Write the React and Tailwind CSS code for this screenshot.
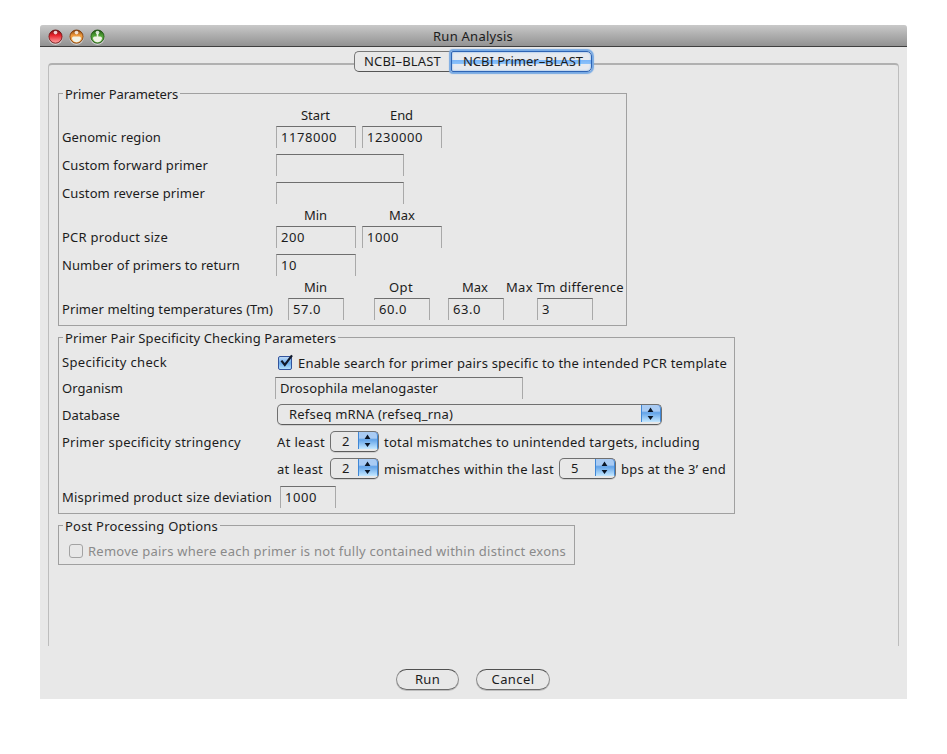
import { useLayoutEffect, useRef, useState } from "react";
import clsx from "clsx";

/* Text run tracked so that its line is exactly `w` pixels wide. */
function T({ w, className, children }) {
  const ref = useRef(null);
  const [spacing, setSpacing] = useState(0);
  useLayoutEffect(() => {
    const el = ref.current;
    el.style.letterSpacing = "0px";
    const natural = el.getBoundingClientRect().width;
    const next = (w - natural) / el.textContent.length;
    el.style.letterSpacing = next + "px";
    setSpacing(next);
  }, [w, children]);
  return (
    <span
      ref={ref}
      className={clsx("inline-block shrink-0 whitespace-pre", className)}
      style={{ letterSpacing: spacing + "px" }}
    >
      {children}
    </span>
  );
}

function Light({ kind }) {
  const colors = {
    red: ["#6d1212", "#e8222b", "#ffa6a6"],
    amber: ["#7d3a08", "#ee9a3c", "#f4ab55"],
    green: ["#1d5210", "#4fa035", "#6fbb52"],
  }[kind];
  return (
    <svg className="h-[16px] w-[15px]" viewBox="0 0 15 16">
      <defs>
        <linearGradient id={"g-" + kind} x1="0" y1="0" x2="0" y2="1">
          <stop offset="0" stopColor={colors[0]} />
          <stop offset="0.4" stopColor={colors[1]} />
          <stop offset="1" stopColor={colors[2]} />
        </linearGradient>
      </defs>
      <circle cx="7.5" cy="8.6" r="7.3" fill="#dcdcdc" opacity="0.8" />
      <circle cx="7.5" cy="7.6" r="6.6" fill={`url(#g-${kind})`} stroke={colors[0]} strokeWidth="0.9" />
      {kind !== "red" && <path d="M3 9.4 Q3 7.4 4.6 7.4 H10.4 Q12 7.4 12 9.4 Q11 13.2 7.5 13.2 Q4 13.2 3 9.4 Z" fill="#f0f2e6" />}
      {kind === "green" && <rect x="6.7" y="4.5" width="1.6" height="4" fill="#f0f2e6" />}
      <ellipse cx="7.5" cy="3.6" rx="1.9" ry="1.8" fill="#fff" opacity="0.8" />
    </svg>
  );
}

function Field({ className, w, children }) {
  return (
    <div
      className={clsx(
        "flex h-[22px] shrink-0 items-center border-x border-t border-x-[#a9a9a9] border-t-[#6e6e6e] pb-px pl-[4px]",
        className
      )}
    >
      {children && <T w={w}>{children}</T>}
    </div>
  );
}

function Row({ h, label, w, labelClass, children }) {
  return (
    <div className={clsx("flex items-center", h)}>
      <div className={clsx("w-[214px] shrink-0 whitespace-nowrap", labelClass)}>{label && <T w={w}>{label}</T>}</div>
      {children}
    </div>
  );
}

function Group({ title, w, className, children }) {
  return (
    <section className={clsx("relative border border-[#a0a0a0] pl-[3px]", className)}>
      <h2 className="absolute left-[4px] top-[-8px] flex h-4 items-center bg-[#e8e8e8] px-[2px]">
        <T w={w}>{title}</T>
      </h2>
      {children}
    </section>
  );
}

function Select({ className, inner, w, children }) {
  return (
    <div
      className={clsx(
        "flex h-[21px] shrink-0 overflow-hidden rounded-[5px] border border-[#707070] border-b-[#5c5c5c] shadow-[0_1px_0_#cfcfcf]",
        className
      )}
    >
      <div className={clsx("flex flex-1 items-center pb-px", inner)}>
        <T w={w}>{children}</T>
      </div>
      <div className="-mr-px -mt-px h-[18px] w-[21px] shrink-0 rounded-tr-[5px] border-r-2 border-t border-r-[#3f87d6] border-t-[#24318f] bg-linear-to-b from-[#a9cbf3] from-35% via-[#62a3e8] via-45% to-[#c4e8ff]">
        <svg className="h-[17px] w-[19px]" viewBox="0 0 19 17">
          <rect x="0" y="0" width="1" height="17" fill="#3f87d6" />
          <path d="M6.6 7 L9.5 2.6 L12.4 7 Z M6.6 11 L9.5 15 L12.4 11 Z" fill="#0b1626" />
        </svg>
      </div>
    </div>
  );
}

function Button({ className, w, children }) {
  return (
    <button
      className={clsx(
        "flex h-[21px] items-center justify-center rounded-full border border-x-[#8a8a8a] border-b-[#6c6c6c] border-t-[#505050] pb-px shadow-[0_1px_0_#bdbdbd]",
        className
      )}
    >
      <T w={w}>{children}</T>
    </button>
  );
}

export default function App() {
  return (
    <div className="h-[754px] w-[947px] overflow-hidden bg-white pl-[40px] pt-[25px] font-['Noto_Sans','Open_Sans',sans-serif] text-[13px] leading-4 text-[#1c1c1c]">
      <div className="flex h-[674px] w-[867px] flex-col overflow-hidden rounded-t-[3px] bg-[#e8e8e8]">
        <header className="flex h-[22px] shrink-0 items-center border-b border-[#3f3f3f] bg-linear-to-b from-[#c9c9c9] to-[#929292] pl-[8px]">
          <div className="flex gap-[6px] pt-[2px]">
            <Light kind="red" />
            <Light kind="amber" />
            <Light kind="green" />
          </div>
          <h1 className="ml-[328px] flex pt-px">
            <T w={80}>Run Analysis</T>
          </h1>
        </header>

        <nav className="z-10 mt-[4px] flex h-[21px] shrink-0 pl-[314px]">
          <div className="flex w-[97px] items-center rounded-l-[5px] border border-r-0 border-[#777] border-b-[#555] bg-[#e8e8e8] pb-px pl-[9px]">
            <T w={77}>NCBI–BLAST</T>
          </div>
          <div className="flex w-[141px] items-center rounded-r-[5px] rounded-l-[2px] border border-[#2e64b4] bg-[linear-gradient(#e6eaf0_8px,#79b5f8_8px,#8cc3fb_12px,#e6eaf0_12px)] pb-px pl-[11px] shadow-[0_0_1px_2px_#78aae4,inset_0_0_2px_#6fa9e8]">
            <T w={120}>NCBI Primer–BLAST</T>
          </div>
        </nav>

        <main className="ml-[8px] mt-[-9px] h-[583px] w-[851px] shrink-0 rounded-t-[4px] border-x border-t-2 border-x-[#bdbdbd] border-t-[#b0b0b0] pl-[9px] pt-[28px]">
          <Group title="Primer Parameters" w={113} className="h-[233px] w-[569px] pt-[13px]">
            <div className="flex h-4 items-center pl-[239px]">
              <T w={29} className="mr-[60px]">Start</T>
              <T w={23}>End</T>
            </div>
            <Row h="h-[28px]" label="Genomic region" w={99}>
              <Field className="mr-[6px] w-[80px]" w={56}>1178000</Field>
              <Field className="w-[80px]" w={56}>1230000</Field>
            </Row>
            <Row h="h-[28px]" label="Custom forward primer" w={146}>
              <Field className="w-[128px]" />
            </Row>
            <Row h="h-[28px]" label="Custom reverse primer" w={143}>
              <Field className="w-[128px]" />
            </Row>
            <div className="flex h-4 items-center pl-[242px]">
              <T w={23} className="mr-[62px]">Min</T>
              <T w={26}>Max</T>
            </div>
            <Row h="h-[28px]" label="PCR product size" w={106}>
              <Field className="mr-[6px] w-[80px]" w={24}>200</Field>
              <Field className="w-[80px]" w={32}>1000</Field>
            </Row>
            <Row h="h-[28px]" label="Number of primers to return" w={178}>
              <Field className="w-[80px]" w={16}>10</Field>
            </Row>
            <div className="flex h-4 items-center pl-[242px]">
              <T w={23} className="mr-[62px]">Min</T>
              <T w={24} className="mr-[49px]">Opt</T>
              <T w={26} className="mr-[18px]">Max</T>
              <T w={118}>Max Tm difference</T>
            </div>
            <Row h="h-[28px]" label="Primer melting temperatures (Tm)" w={211}>
              <Field className="ml-[12px] w-[56px]" w={28}>57.0</Field>
              <Field className="ml-[30px] w-[56px]" w={28}>60.0</Field>
              <Field className="ml-[18px] w-[56px]" w={28}>63.0</Field>
              <Field className="ml-[33px] w-[56px]" w={8}>3</Field>
            </Row>
          </Group>

          <Group
            title="Primer Pair Specificity Checking Parameters"
            w={271}
            className="mt-[11px] h-[177px] w-[677px] pt-[13px]"
          >
            <Row h="h-[24px]" label="Specificity check" w={105} labelClass="pb-[2px]">
              <svg className="ml-[2px] h-[18px] w-[18px] shrink-0" viewBox="0 0 18 18">
                <defs>
                  <linearGradient id="check" x1="0" y1="0" x2="0" y2="1">
                    <stop offset="0" stopColor="#c3dcf7" />
                    <stop offset="0.5" stopColor="#6caeef" />
                    <stop offset="1" stopColor="#b8e4ff" />
                  </linearGradient>
                </defs>
                <rect x="0.5" y="2.5" width="13" height="13" rx="1.5" fill="url(#check)" stroke="#33549c" />
                <path d="M3.4 6.6 L6.8 11 L14 1.4" fill="none" stroke="#10192c" strokeWidth="2.2" />
              </svg>
              <T w={429} className="ml-[2px]">
                Enable search for primer pairs specific to the intended PCR template
              </T>
            </Row>
            <Row h="h-[26px]" label="Organism" w={61}>
              <Field className="ml-[-1px] w-[248px]" w={158}>Drosophila melanogaster</Field>
            </Row>
            <Row h="h-[27px]" label="Database" w={58} labelClass="pt-px">
              <Select className="ml-px w-[385px]" inner="pl-[11px]" w={164}>Refseq mRNA (refseq_rna)</Select>
            </Row>
            <Row h="h-[27px]" label="Primer specificity stringency" w={179} labelClass="pt-px">
              <T w={48} className="ml-px mr-[5px] pt-px">At least</T>
              <Select className="mr-[5px] w-[49px]" inner="pl-[11px]" w={8}>2</Select>
              <T w={316} className="pt-px">total mismatches to unintended targets, including</T>
            </Row>
            <Row h="h-[27px]">
              <T w={46} className="ml-px mr-[7px] pt-px">at least</T>
              <Select className="mr-[5px] w-[49px]" inner="pl-[11px]" w={8}>2</Select>
              <T w={170} className="mr-[5px] pt-px">mismatches within the last</T>
              <Select className="mr-[5px] w-[57px]" inner="pl-[11px]" w={8}>5</Select>
              <T w={105} className="pt-px">bps at the 3’ end</T>
            </Row>
            <Row h="h-[30px]" label="Misprimed product size deviation" w={210}>
              <Field className="ml-[4px] w-[56px]" w={32}>1000</Field>
            </Row>
          </Group>

          <Group title="Post Processing Options" w={153} className="mt-[11px] h-[40px] w-[517px] pt-[15px]">
            <div className="flex h-[20px] items-center pl-[7px] text-[#8a8a8a]">
              <span className="h-[14px] w-[14px] rounded-[3px] border border-[#a3a3a3]" />
              <T w={478} className="ml-[5px]">
                Remove pairs where each primer is not fully contained within distinct exons
              </T>
            </div>
          </Group>
        </main>

        <footer className="flex gap-[17px] pl-[356px] pt-[23px]">
          <Button className="w-[63px]" w={25}>Run</Button>
          <Button className="w-[74px]" w={43}>Cancel</Button>
        </footer>
      </div>
    </div>
  );
}
